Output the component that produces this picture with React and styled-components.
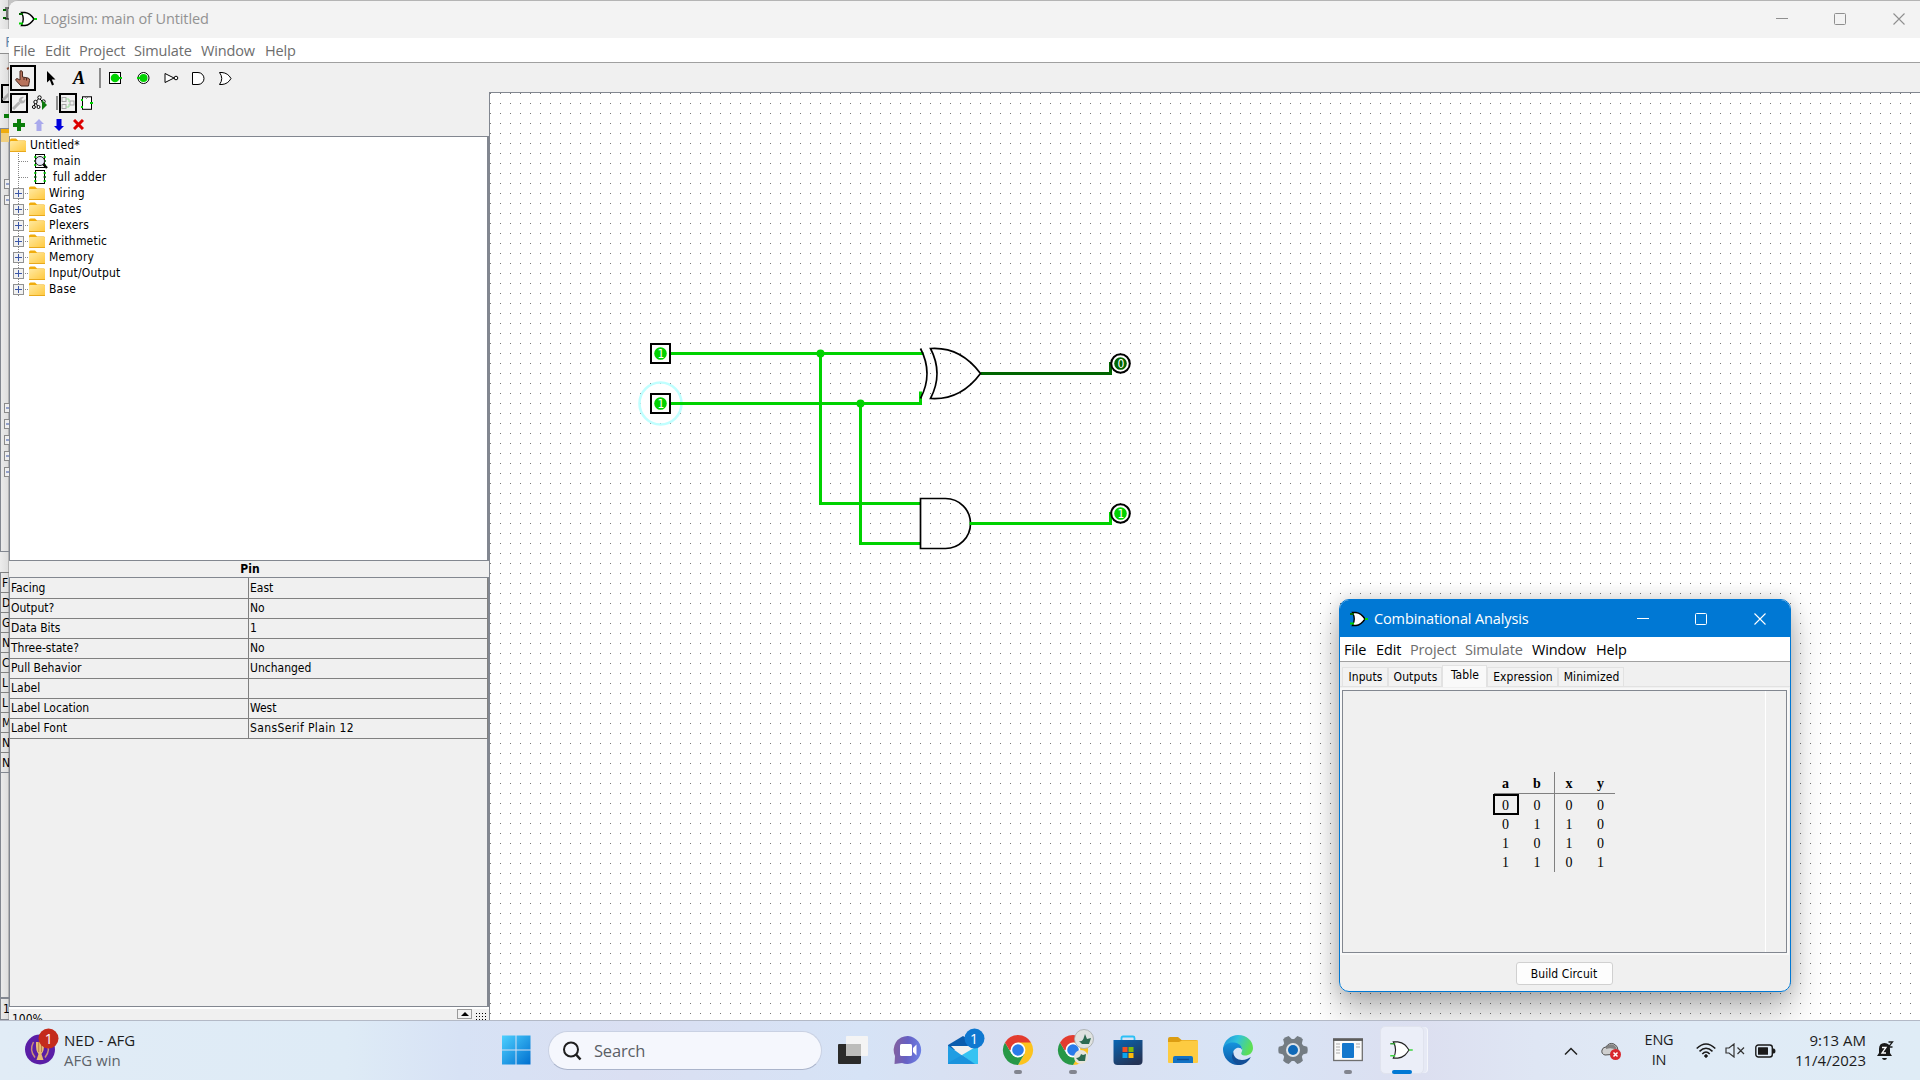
import React from "react";
import styled, { createGlobalStyle, css } from "styled-components";

const SEGOE = `"Open Sans", "Noto Sans", sans-serif`;
const TAHOMA = `"DejaVu Sans Condensed", "DejaVu Sans", sans-serif`;
const LINE = "#828790";
const GREEN = "#00d200";
const DARK = "#006400";

const Global = createGlobalStyle`
  * { box-sizing: border-box; }
  body { margin: 0; overflow: hidden; background: #f0f0f0; }
  svg { display: block; flex: none; }
`;

const Screen = styled.div`
  position: relative;
  width: 1920px;
  height: 1080px;
  display: grid;
  grid-template-rows: 1020px 60px;
  overflow: hidden;
  font-family: ${SEGOE};
`;
const Desktop = styled.div`
  display: grid;
  grid-template-columns: 9px 1fr;
  min-height: 0;
  background: linear-gradient(90deg, #e8e8e8, #c4c4c4 9px);
`;

/* ---------- window behind ---------- */
const BackWindow = styled.div`
  display: flex;
  flex-direction: column;
  overflow: hidden;
  height: 1020px;
  background: linear-gradient(90deg, #ececec, #dcdcdc);
  box-shadow: inset -1px 0 #b4b4b4;
  font: 12px ${TAHOMA};
`;
const BackPart = styled.div`
  flex: none;
  height: ${(p) => p.$h}px;
  padding-left: ${(p) => p.$pad || 0}px;
  padding-top: ${(p) => p.$top || 0}px;
  overflow: hidden;
  ${(p) => p.$menu && css`background: #f4f4f4; color: #5d87ad; font: 15px/24px ${SEGOE}; border-bottom: 1px solid #8e8e8e;`}
  ${(p) => p.$frame && css`border-left: 1px solid ${LINE}; border-top: 1px solid ${LINE}; border-bottom: 1px solid ${LINE};`}
`;
const BackCell = styled.div`
  height: 20px;
  flex: none;
  border-left: 1px solid ${LINE};
  border-top: 1px solid #808080;
  padding-left: 1px;
  line-height: 20px;
`;

/* ---------- main window ---------- */
const Window = styled.div`
  display: flex;
  flex-direction: column;
  height: 1020px;
  min-width: 0;
  overflow: hidden;
  border-top: 1px solid #b4b4b4;
  border-top-left-radius: 9px;
  background: #f0f0f0;
`;
const TitleBar = styled.div`
  flex: none;
  height: 37px;
  display: flex;
  align-items: center;
  padding: 0 0 1px 10px;
  background: #f3f3f3;
  color: #929292;
`;
const TitleText = styled.div`
  flex: 1;
  margin-left: 6px;
  font-size: 14.5px;
  line-height: 20px;
  letter-spacing: -0.12px;
  white-space: nowrap;
`;
const Caption = styled.div`
  width: ${(p) => p.$w}px;
  display: flex;
  justify-content: center;
`;
const MenuBar = styled.div`
  flex: none;
  height: ${(p) => p.$h}px;
  display: flex;
  gap: 9px;
  padding-left: 4px;
  background: #fff;
  border-bottom: 1px solid #a0a0a0;
  font-size: 14.5px;
  line-height: 25px;
  letter-spacing: -0.15px;
`;
const MenuItem = styled.span`
  color: ${(p) => (p.$dim ? "#6d6d6d" : "#000")};
  width: ${(p) => p.$w}px;
  white-space: nowrap;
`;
const ToolRow = styled.div`
  flex: none;
  display: flex;
  align-items: center;
  height: ${(p) => p.$h}px;
  padding-top: ${(p) => p.$top || 0}px;
`;
const Slot = styled.div`
  width: ${(p) => p.$w || 28}px;
  display: flex;
  justify-content: center;
`;
const Picked = styled.div`
  width: ${(p) => p.$w}px;
  height: ${(p) => p.$h}px;
  flex: none;
  border: 2px solid #000;
  display: flex;
  align-items: center;
  justify-content: center;
`;
const Divider = styled.div`
  width: 8px;
  height: ${(p) => p.$h}px;
  border-right: 2px solid #8c8c8c;
`;
const Body = styled.div`
  flex: 1;
  min-height: 0;
  display: grid;
  grid-template-columns: 480px 1fr;
`;
const Side = styled.div`
  display: flex;
  flex-direction: column;
  min-height: 0;
`;
const Tree = styled.div`
  flex: none;
  height: 425px;
  background: #fff;
  border: 1px solid ${LINE};
  border-right-width: 2px;
`;
const TreeRow = styled.div`
  height: 16px;
  display: flex;
  align-items: center;
  font: 12px/16px ${TAHOMA};
  letter-spacing: 0.2px;
  color: #000;
  white-space: pre;
`;
const Label = styled.span`
  margin-left: ${(p) => p.$ml}px;
`;
const PropTitle = styled.div`
  flex: none;
  height: 16px;
  padding-left: 2px;
  text-align: center;
  font: bold 12px/17px ${TAHOMA};
`;
const PropPane = styled.div`
  height: 430px;
  flex: none;
  border: 1px solid ${LINE};
  border-right-width: 2px;
`;
const PropRow = styled.div`
  display: grid;
  grid-template-columns: 239px 239px;
  height: 20px;
  width: 478px;
`;
const PropCell = styled.div`
  border-right: 1px solid #808080;
  border-bottom: 1px solid #808080;
  padding-left: 1px;
  font: 12px/20px ${TAHOMA};
  letter-spacing: ${(p) => (p.$wide ? "0.38px" : "0")};
  white-space: nowrap;
`;
const Status = styled.div`
  flex: 1;
  min-height: 0;
  display: flex;
  overflow: hidden;
  border-top: 2px solid #fff;
  font: 12px/16px ${TAHOMA};
  padding-left: 3px;
`;
const Zoom = styled.div`
  flex: 1;
  padding-top: 2px;
`;
const Spin = styled.div`
  width: 15px;
  height: 10px;
  border: 1px solid #9a9a9a;
  display: flex;
  justify-content: center;
  align-items: center;
  margin-right: 3px;
`;
const Canvas = styled.div`
  border-left: 1px solid ${LINE};
  border-top: 1px solid ${LINE};
  background: #fff;
  overflow: hidden;
  min-width: 0;
  min-height: 0;
`;

/* ---------- analysis window ---------- */
const Dialog = styled.div`
  position: absolute;
  left: 1339px;
  top: 599px;
  width: 452px;
  height: 393px;
  display: flex;
  flex-direction: column;
  border: 1px solid #0078d4;
  border-radius: 10px;
  background: #f0f0f0;
  overflow: hidden;
`;
const DialogShade = styled.div`
  position: absolute;
  left: 1339px;
  top: 599px;
  width: 452px;
  height: 393px;
  border-radius: 10px;
  box-shadow: 0 18px 34px rgba(0, 0, 0, 0.3), 0 0 18px rgba(0, 0, 0, 0.16);
`;
const DialogTitle = styled(TitleBar)`
  background: #0078d4;
  color: #fff;
  padding: 0 0 0 10px;
`;
const Tabs = styled.div`
  flex: none;
  height: 25px;
  display: flex;
  align-items: flex-end;
  padding-left: 2px;
  border-bottom: 1px solid #e2e2e2;
  font: 12px/19px ${TAHOMA};
`;
const Tab = styled.div`
  width: ${(p) => p.$w}px;
  height: ${(p) => (p.$on ? 22 : 19)}px;
  margin-bottom: ${(p) => (p.$on ? -1 : 0)}px;
  padding-left: 1px;
  text-align: center;
  white-space: nowrap;
  letter-spacing: 0.1px;
  background: ${(p) => (p.$on ? "#f9f9f9" : "#f2f2f2")};
  border: 1px solid #e2e2e2;
  border-bottom: 0;
`;
const Pane = styled.div`
  flex: none;
  width: 445px;
  height: 263px;
  margin: 3px 0 0 2px;
  border: 1px solid ${LINE};
  display: grid;
  grid-template-columns: 1fr 21px;
  outline: 2px solid #f8f8f8;
`;
const Gutter = styled.div`
  border-left: 1px solid #fff;
`;
const Truth = styled.div`
  display: grid;
  grid-template-columns: 60px 61px;
  grid-template-rows: 22px 78px;
  align-self: start;
  justify-self: start;
  margin: 81px 0 0 151px;
  font: 14px "Liberation Serif", serif;
`;
const Block = styled.div`
  display: grid;
  grid-template-columns: ${(p) => (p.$right ? "28px 35px" : "23px 32px")};
  column-gap: ${(p) => (p.$right ? 0 : 4)}px;
  grid-auto-rows: 19px;
  justify-items: center;
  align-content: start;
  line-height: 19px;
  padding-top: 2px;
  font-weight: ${(p) => (p.$head ? "bold" : "normal")};
  border-bottom: ${(p) => (p.$head ? "1px solid #808080" : "0")};
  border-left: ${(p) => (p.$right ? "1px solid #808080" : "0")};
`;
const Cell = styled.div`
  text-align: center;
  ${(p) => p.$focus && css`width: 26px; height: 21px; margin-top: -2px; border: 2px solid #000; line-height: 19px;`}
`;
const ButtonRow = styled.div`
  flex: 1;
  display: flex;
  justify-content: center;
  align-items: flex-start;
  padding: 9px 2px 0 0;
`;
const Button = styled.button`
  width: 97px;
  height: 23px;
  padding: 0;
  border: 1px solid #d0d0d0;
  border-radius: 3px;
  background: #fdfdfd;
  color: #000;
  font: 12px ${TAHOMA};
  letter-spacing: 0.1px;
`;

/* ---------- taskbar ---------- */
const Taskbar = styled.div`
  position: relative;
  display: flex;
  align-items: center;
  border-top: 1px solid #b3b9c6;
  background: linear-gradient(90deg, #e1ecf6 0, #deebf6 18%, #d7e2f5 24%, #dadff2 33%, #d6e3f6 45%, #dadff0 53%, #d8e4f6 65%, #dcdff0 74%, #dfe6f4 80%, #e0ebf6 88%, #dfecf6 100%);
`;
const Widgets = styled.div`
  width: 488px;
  padding-left: 25px;
  display: flex;
  align-items: center;
  gap: 5px;
`;
const Emblem = styled.div`
  margin-top: -8px;
`;
const TwoLines = styled.div`
  font-size: ${(p) => p.$fs || 15}px;
  line-height: 20px;
  letter-spacing: ${(p) => p.$ls || "0"};
  text-align: ${(p) => p.$align || "left"};
  color: #1c1c1c;
  white-space: nowrap;
  margin-top: -2px;
`;
const Muted = styled.div`
  color: #5d6369;
`;
const SearchBox = styled.div`
  width: 274px;
  height: 39px;
  margin: 0 3px 0 5px;
  border-radius: 20px;
  border: 1px solid #c9d1e3;
  border-bottom-color: #aab4cb;
  background: #f5f7fd;
  display: flex;
  align-items: center;
  gap: 12px;
  padding-left: 13px;
  font-size: 16.5px;
  letter-spacing: -0.2px;
  color: #5b5f66;
`;
const AppSlot = styled.div`
  position: relative;
  width: ${(p) => p.$w || 55}px;
  height: 59px;
  padding-bottom: 1px;
  display: flex;
  align-items: center;
  justify-content: center;
`;
const Mark = styled.i`
  position: absolute;
  left: 50%;
  bottom: 6px;
  width: ${(p) => (p.$on ? 20 : 8)}px;
  height: 4px;
  margin-left: ${(p) => (p.$on ? -10 : -4)}px;
  border-radius: 2px;
  background: ${(p) => (p.$on ? "#0078d4" : "#82858f")};
`;
const ActiveTile = styled.div`
  width: 44px;
  height: 48px;
  border-radius: 5px;
  border: 1px solid #e0e3ee;
  background: #ebeef8;
  box-shadow: 4px 0 0 -1px #e6e9f5, 5px 0 0 -1px #f4f6fb;
  display: flex;
  align-items: center;
  justify-content: center;
`;
const Tray = styled.div`
  margin-left: auto;
  display: flex;
  align-items: center;
  padding-right: 26px;
`;
const TrayItem = styled.div`
  width: ${(p) => p.$w}px;
  margin-right: ${(p) => p.$mr}px;
  ${(p) => p.$end && css`display: flex; justify-content: flex-end;`}
`;

/* ---------- drawings ---------- */
const GateLogo = ({ w = 18, h = 16, thin }) => (
  <svg width={w} height={h} viewBox="0 0 18 16">
    <path d="M2.500 1.500H6C11 2 13 5 15 8C13 11 11 14 6 14.500H2.500Q6 8 2.500 1.500Z" fill="#fff" stroke={thin ? "#222" : "#000"} strokeWidth={thin ? 0.9 : 1.4} />
    <path d="M0 3H4" stroke={thin ? "#2a9a2a" : DARK} strokeWidth={thin ? 1.1 : 2} />
    <path d="M0 12.500H4M15 8H18" stroke={thin ? "#3fd43f" : GREEN} strokeWidth={thin ? 1.2 : 2} />
  </svg>
);
const Captions = ({ color, sizes }) => (
  <>
    <Caption $w={sizes[0]}><svg width="12" height="12"><path d="M0 5.500H12" stroke={color} /></svg></Caption>
    <Caption $w={sizes[1]}><svg width="12" height="12"><rect x=".5" y=".5" width="11" height="11" rx="1" fill="none" stroke={color} /></svg></Caption>
    <Caption $w={sizes[2]}><svg width="12" height="12"><path d="M.5 .5L11.500 11.500M11.500 .5L.5 11.500" stroke={color} strokeWidth="1.100" /></svg></Caption>
  </>
);
const Folder = () => (
  <svg width="16" height="14" viewBox="0 0 16 14">
    <defs><linearGradient id="fo" x1="0" y1="0" x2="1" y2="1"><stop offset="0" stopColor="#ffe9a0" /><stop offset="1" stopColor="#ffc83d" /></linearGradient></defs>
    <path d="M0 4V2Q0 .5 1.500 .5H6L8 2.500H15Q16 2.500 16 4Z" fill="#f0ac0d" />
    <rect y="3" width="16" height="11" rx="1" fill="url(#fo)" />
    <path d="M0 13.500H16" stroke="#e8a91c" />
  </svg>
);
const Branch = ({ box }) => (
  <svg width="19" height="16" viewBox="0 0 19 16">
    <path d="M8.500 0V16" stroke="#888" strokeDasharray="1 1" />
    <path d="M9 8.500H19" stroke="#888" strokeDasharray="1 1" />
    {box && <><rect x="3.500" y="3.500" width="10" height="10" fill="#f1f1f1" stroke="#919191" /><path d="M5 8.500H12M8.500 5V12" stroke="#3b57a8" /></>}
  </svg>
);
const Chip = ({ lens }) => (
  <svg width="14" height="16" viewBox="0 0 14 16">
    <rect x="1.500" y="1.500" width="9" height="13" fill="#fff" stroke="#000" />
    {[4, 8, 12].map((y) => <path key={y} d={`M0 ${y}H2.500M9.500 ${y}H12`} stroke={y === 8 ? DARK : GREEN} strokeWidth="1.300" />)}
    {lens && <><path d="M9 11L13 15" stroke="#000" strokeWidth="2.400" /><circle cx="6" cy="8" r="4.500" fill="#e9e9fb" stroke="#222" /></>}
  </svg>
);
const Minus = ({ y }) => <g transform={`translate(4 ${y})`}><rect x=".5" y=".5" width="9" height="9" fill="#eee" stroke="#8a8a8a" /><path d="M2 5H8" stroke="#3b57a8" /></g>;

const PinValue = ({ x, y, v, round, color = GREEN }) => (
  <g>
    {round ? <circle cx={x} cy={y} r="9.300" fill="#fff" stroke="#000" strokeWidth="2" /> : <rect x={x - 9.5} y={y - 9.5} width="19" height="19" fill="#fff" stroke="#000" strokeWidth="2" />}
    <circle cx={x} cy={y} r="6.300" fill={color} />
    <text x={x + 0.5} y={y + 4.5} textAnchor="middle" fontSize="12" fontFamily="DejaVu Sans Condensed, DejaVu Sans, sans-serif" fill="#fff">{v}</text>
  </g>
);

const Circuit = () => (
  <svg width="1430" height="927" viewBox="490 93 1430 927">
    <defs>
      <pattern id="dots" x="490" y="93" width="10" height="10" patternUnits="userSpaceOnUse"><rect width="1" height="1" fill="#777" /></pattern>
    </defs>
    <rect x="490" y="93" width="1430" height="927" fill="url(#dots)" />
    <g transform="translate(.5 .5)" fill="none" strokeWidth="3">
      <circle cx="660" cy="403" r="21" stroke="#c0ffff" strokeWidth="2.600" />
      <path d="M670 353H923M820 353V503H920M670 403H920V391M860 403V543H920M970 523H1110V513H1112" stroke={GREEN} />
      <path d="M980 373H1110V363H1112" stroke={DARK} />
      <circle cx="820" cy="353" r="4" fill={GREEN} />
      <circle cx="860" cy="403" r="4" fill={GREEN} />
      <g stroke="#000" strokeWidth="1.700">
        <path d="M920 348Q933 373 920 398" />
        <path d="M930 348Q943 373 930 398Q960 400 980 373Q960 346 930 348Z" />
        <path d="M920 498H945A25 25 0 0 1 945 548H920Z" />
      </g>
      <path d="M969 523H974" stroke={GREEN} />
      <PinValue x={660} y={353} v="1" />
      <PinValue x={660} y={403} v="1" />
      <PinValue x={1120} y={363} v="0" round color={DARK} />
      <PinValue x={1120} y={513} v="1" round />
    </g>
  </svg>
);

const Chrome = ({ guest }) => (
  <svg width="42" height="44" viewBox="-21 -22 42 44">
    <path d="M0 0L-13 -7.500A15 15 0 0 1 13 -7.500Z" fill="#e33b2e" />
    <path d="M0 -7.500H13A15 15 0 0 1 0 15L6.500 3.750Z" fill="#fcc31e" />
    <path d="M-13 -7.500A15 15 0 0 0 0 15L6.500 3.700L-6.500 3.700Z" fill="#279847" />
    <path d="M-13 -7.500H0V0H-8.600Z" fill="#e33b2e" />
    <circle r="7.400" fill="#fff" /><circle r="5.800" fill="#2a7be9" />
    {guest && <>
      <circle cx="11" cy="-11" r="9.500" fill="#dfe2e0" stroke="#a5a8a8" strokeWidth=".8" />
      <path d="M6 -9Q10 -8 11 -13L12 -16L14 -11L18 -12L16 -6H9Z" fill="#2d6a50" />
      <circle cx="8" cy="7" r="7" fill="#e6e4dc" />
      <path d="M3 8Q7 8 8 4L10 5L13 4L12 11H6Z" fill="#2d6a50" />
    </>}
  </svg>
);
const Win = () => (
  <svg width="30" height="30" viewBox="0 0 30 30">
    <defs><linearGradient id="wn" x1="0" y1="0" x2="1" y2="1"><stop offset="0" stopColor="#4dd0ff" /><stop offset="1" stopColor="#006fcf" /></linearGradient></defs>
    <path fill="url(#wn)" d="M1 .5H14.500V14.500H1ZM15.500 .5H29.500V14.500H15.500ZM1 15.500H14.500V29.500H1ZM15.500 15.500H29.500V29.500H15.500Z" />
  </svg>
);
const TaskView = () => (
  <svg width="30" height="30" viewBox="0 0 30 30">
    <rect x="0" y="9" width="23" height="20" rx="1" fill="#2b2b2a" />
    <rect x="8" y="1" width="22" height="20" rx="1" fill="#f4f4f4" />
    <rect x="8" y="9" width="15" height="12" fill="#bdbdbb" />
  </svg>
);
const Chat = () => (
  <svg width="30" height="30" viewBox="0 0 30 30">
    <defs><linearGradient id="ch" x1="0" y1=".3" x2="1" y2=".4"><stop offset="0" stopColor="#84609e" /><stop offset=".5" stopColor="#6660c4" /><stop offset="1" stopColor="#6c80e4" /></linearGradient></defs>
    <path d="M15 1A14 14 0 1 1 9 28L1.500 29L2 21A14 14 0 0 1 15 1Z" fill="url(#ch)" />
    <rect x="7" y="9" width="12" height="12" rx="1.500" fill="#fff" /><path d="M20 13L23.500 9.500V20.500L20 17Z" fill="#fff" />
  </svg>
);
const Mail = () => (
  <svg width="44" height="44" viewBox="-7 -8 44 44">
    <path d="M0 9L15 0L30 9V14H0Z" fill="#0a5cad" />
    <path d="M3 10H27V18L15 22Z" fill="#f0f0f0" />
    <path d="M0 9.500L26 28H0Z" fill="#1f9de3" /><path d="M30 9.500V28H26L14 19Z" fill="#35c3f2" /><path d="M14 19L27 28H0V27Z" fill="#1a93dd" />
    <circle cx="26.500" cy="2.500" r="10" fill="#0f78d0" />
    <text x="26" y="7.500" textAnchor="middle" fontFamily="Open Sans, sans-serif" fontSize="14" fill="#fff">1</text>
  </svg>
);
const Store = () => (
  <svg width="30" height="30" viewBox="0 0 30 30">
    <defs><linearGradient id="st" x1="0" y1="0" x2=".6" y2="1"><stop offset="0" stopColor="#0866b4" /><stop offset="1" stopColor="#243456" /></linearGradient></defs>
    <path d="M8.500 6V3Q8.500 1.500 10 1.500H20Q21.500 1.500 21.500 3V6" fill="none" stroke="#2cc0f6" strokeWidth="1.800" />
    <path d="M.5 5H29.500V26Q29.500 30 25.500 30H4.500Q.5 30 .5 26Z" fill="url(#st)" />
    <path fill="#f35022" d="M9.500 12H14.500V17H9.500Z" /><path fill="#80bb0a" d="M15.500 12H20.500V17H15.500Z" /><path fill="#0aa5ee" d="M9.500 18H14.500V23H9.500Z" /><path fill="#ffb90a" d="M15.500 18H20.500V23H15.500Z" />
  </svg>
);
const Explorer = () => (
  <svg width="30" height="28" viewBox="0 0 30 28">
    <path d="M0 6V3Q0 1 2 1H10L13.500 4H28Q30 4 30 6V9H0Z" fill="#dc9d12" />
    <path d="M0 6H11L14 4.500H30V26Q30 27 29 27H1Q0 27 0 26Z" fill="#fdcb41" />
    <path d="M5 27V22Q5 20 7 20H23Q25 20 25 22V27Z" fill="#1272c4" /><path d="M9 23.500H21" stroke="#0a4c92" strokeWidth="1.400" />
  </svg>
);
const Edge = () => (
  <svg width="30" height="30" viewBox="0 0 30 30">
    <defs>
      <linearGradient id="e1" x1="0" y1="0" x2="1" y2=".3"><stop offset="0" stopColor="#1b8ddb" /><stop offset=".5" stopColor="#30c2dc" /><stop offset="1" stopColor="#5ddf55" /></linearGradient>
      <linearGradient id="e2" x1="0" y1="0" x2="0" y2="1"><stop offset="0" stopColor="#1593dd" /><stop offset="1" stopColor="#0e59a7" /></linearGradient>
    </defs>
    <path d="M0 14C1 5 8 0 15 0C24 0 30 6 30 13C30 18 26 20.500 22 20.500C19 20.500 17.500 19 18.500 17.500C21 13 17 9 12 9C6 9 1 12 0 17Z" fill="url(#e1)" />
    <path d="M0 14C1 9.500 6 7 11 7.500C16 8 19.500 11 19 15C18 11.500 11 12 10 18C9.500 24 13 29 18 29.700C8 31.500 0 24 0 14Z" fill="url(#e2)" />
    <path d="M10.500 17C10 21.500 14 25 19 25C23 25 25.500 23.500 27.800 22C25 28 19.500 30.500 15 30C9 27.500 7.500 20.500 10.500 17Z" fill="#124f97" />
  </svg>
);
const Gear = () => (
  <svg width="30" height="30" viewBox="-15 -15 30 30">
    <g fill="#747c83">
      <circle r="11" />
      {[30, 90, 150, 210, 270, 330].map((a) => <path key={a} d="M-5 -8L-3.200 -14.200Q0 -15.200 3.200 -14.200L5 -8Z" transform={`rotate(${a})`} />)}
    </g>
    <circle r="7" fill="#dfe4ea" /><circle r="5" fill="#1069b8" />
  </svg>
);
const Panel = () => (
  <svg width="30" height="24" viewBox="0 0 30 24">
    <rect x=".7" y="1" width="28.600" height="21.500" fill="#fafafa" stroke="#6f6f6f" strokeWidth="1.300" />
    <path d="M0 1.700H30" stroke="#5d5d5d" strokeWidth="2.500" />
    <rect x="9" y="5" width="12" height="15" rx="1" fill="#1477cc" />
    <path d="M3 6H7M3 9H7M3 12H7M3 15H7M23 6H27M23 9H27" stroke="#aaa" />
  </svg>
);
const Trophy = () => (
  <svg width="34" height="38" viewBox="0 0 34 38">
    <circle cx="15" cy="21.500" r="15" fill="#5a1ea6" />
    <path d="M8.500 14Q4 22 10 29.500M21.500 14Q26 22 20 29.500" fill="none" stroke="#c88f79" strokeWidth="1.500" />
    <path d="M11 14H19Q19.500 23 16.500 26L18.500 32H11.500L13.500 26Q10.500 23 11 14Z" fill="#e9ba74" /><path d="M13.700 14V24M16.500 14V24" stroke="#b57b45" strokeWidth=".9" />
    <circle cx="23.500" cy="10.500" r="10" fill="#c42b1c" />
    <text x="23.800" y="15.500" textAnchor="middle" fontFamily="Open Sans, sans-serif" fontSize="14" fill="#fff">1</text>
  </svg>
);

const props = [["Facing", "East"], ["Output?", "No"], ["Data Bits", "1"], ["Three-state?", "No"], ["Pull Behavior", "Unchanged"], ["Label", ""], ["Label Location", "West"], ["Label Font", "SansSerif Plain 12"]];
const libs = ["Wiring", "Gates", "Plexers", "Arithmetic", "Memory", "Input/Output", "Base"];
const menus = [["File", 23], ["Edit", 25], ["Project", 46], ["Simulate", 58], ["Window", 55], ["Help", 32]];
const backs = ["F", "D", "G", "N", "C", "L", "L", "M", "N", "N"];
const ins = ["0", "0", "0", "1", "1", "0", "1", "1"];
const outs = ["0", "0", "1", "0", "1", "0", "0", "1"];

const Back = () => (
  <BackWindow>
    <BackPart $h={29}><svg width="9" height="29"><path d="M3 10H6M3 18H6" stroke={DARK} strokeWidth="2" /><path d="M5 8H9M7 9V19M5 19H9" stroke="#000" fill="none" /></svg></BackPart>
    <BackPart $h={25} $menu $pad={5}>F</BackPart>
    <BackPart $h={74}><svg width="9" height="74"><path d="M7 15l2-1" stroke="#8a4a33" strokeWidth="2" /><path d="M9 31H2V48H9" fill="none" stroke="#000" strokeWidth="2" /><path d="M3 46L9 40" stroke="#aaa" strokeWidth="3" /><path d="M4 62H9" stroke="#087a08" strokeWidth="4" /></svg></BackPart>
    <BackPart $h={424} $frame><svg width="9" height="420" viewBox="1 129 9 420"><rect x="1" y="129" width="9" height="4" fill="#f0ac0d" /><rect x="1" y="133" width="9" height="9" fill="#f0cf7e" />{[179, 195, 403, 419, 435, 451, 467].map((y) => <Minus key={y} y={y} />)}</svg></BackPart>
    <BackPart $h={20} />
    {backs.map((t, i) => <BackCell key={i}>{t}</BackCell>)}
    <BackPart $h={226} $frame />
    <BackPart $h={22} $frame $pad={2} $top={3}>1</BackPart>
  </BackWindow>
);

const Toolbar = () => (
  <ToolRow $h={29} $top={1}>
    <Slot><Picked $w={26} $h={26}>
      <svg width="16" height="17" viewBox="0 0 16 17"><path d="M5 1Q7 0 7.500 2V7L13 8Q15 8.500 14.500 10.500L13.500 16H6L1 10.500Q0 9 2 8.500L5 10Z" fill="#b8735c" stroke="#4a2a20" /><path d="M9 7.500V10M11.500 8V10.500" stroke="#4a2a20" /></svg>
    </Picked></Slot>
    <Slot><svg width="10" height="15" viewBox="0 0 10 15"><path d="M1 0V11.500L3.800 9L6 14.500L8 13.600L5.800 8.500H9.500Z" /></svg></Slot>
    <Slot><svg width="24" height="18"><text x="6" y="15" fontFamily="Liberation Serif, serif" fontWeight="bold" fontStyle="italic" fontSize="18">A</text></svg></Slot>
    <Divider $h={20} />
    <Slot><svg width="15" height="14"><rect x="1.500" y="1.500" width="11" height="11" fill="#fff" stroke="#000" /><circle cx="7" cy="7" r="4.300" fill={GREEN} /><path d="M10 7H14" stroke={GREEN} strokeWidth="2" /></svg></Slot>
    <Slot><svg width="15" height="14"><circle cx="7.500" cy="7" r="5.500" fill="#fff" stroke="#000" /><circle cx="7.500" cy="7" r="4" fill={GREEN} /><path d="M1 7H5" stroke={GREEN} strokeWidth="2" /></svg></Slot>
    <Slot><svg width="15" height="12"><path d="M1 1.500V10.500L10 6Z" fill="#fff" stroke="#000" /><circle cx="12" cy="6" r="1.800" fill="#fff" stroke="#000" /></svg></Slot>
    <Slot $w={27}><svg width="15" height="15"><path d="M1.500 1.500H7A6 6 0 0 1 7 13.500H1.500Z" fill="#fff" stroke="#000" /></svg></Slot>
    <Slot><svg width="16" height="15"><path d="M1.500 1.500H4Q10 2 13 7.500Q10 13 4 13.500H1.500Q6 7.500 1.500 1.500Z" fill="#fff" stroke="#000" /></svg></Slot>
  </ToolRow>
);

const SideTools = () => (
  <>
    <ToolRow $h={21}>
      <Slot $w={20}><Picked $w={18} $h={20}><svg width="14" height="14" viewBox="0 0 14 14"><path d="M1 13L7.500 6.500" stroke="#b2b2b2" strokeWidth="3" /><path d="M7 3Q9 0 12 1L9.500 3.500L11 5L13.500 3Q13.500 8 9 7.500Q6 6 7 3Z" fill="#b2b2b2" /></svg></Picked></Slot>
      <Slot $w={21}><svg width="16" height="15" viewBox="0 0 16 15"><g fill="#fff" stroke="#000"><path d="M7 3L3 8L2 12M7 3L11 7M4 8L6 12" fill="none" /><circle cx="7.500" cy="2.500" r="1.700" /><circle cx="3.500" cy="7" r="1.700" /><circle cx="1.900" cy="12" r="1.500" /><circle cx="6.500" cy="12" r="1.500" /><circle cx="11.500" cy="6.500" r="1.700" /></g><path d="M10 5L15 10L10 15Z" fill="#0c7a0c" /></svg></Slot>
      <Divider $h={14} />
      <Slot $w={19}><Picked $w={18} $h={20}><svg width="14" height="14" viewBox="0 0 14 14"><g fill="none" stroke="#a6a6a6"><rect x="1" y="1.500" width="4" height="4" /><rect x="1" y="8.500" width="4" height="4" /><rect x="9" y="5" width="4" height="4" /></g><path d="M5 3H8V6M5 11H8V8" fill="none" stroke="#9adb9a" /></svg></Picked></Slot>
      <Slot $w={20}><svg width="12" height="14" viewBox="0 0 12 14"><rect x="1.500" y=".8" width="9" height="12.500" fill="#fff" stroke="#000" /><path d="M4 1Q5.500 4 7 1" fill="none" stroke="#777" /><path d="M0 4H2M0 11H2M9 7H12" stroke={GREEN} strokeWidth="2" /></svg></Slot>
    </ToolRow>
    <ToolRow $h={23}>
      <Slot $w={20}><svg width="12" height="12"><path d="M0 6H12M6 0V12" stroke="#0a7d0a" strokeWidth="4" /></svg></Slot>
      <Slot $w={20}><svg width="10" height="12"><path d="M5 0L10 5H7.500V12H2.500V5H0Z" fill="#a9a9ec" /></svg></Slot>
      <Slot $w={20}><svg width="10" height="12"><path d="M5 12L10 7H7.500V0H2.500V7H0Z" fill="#0000dc" /></svg></Slot>
      <Slot $w={19}><svg width="11" height="11"><path d="M1 1L10 10M10 1L1 10" stroke="#dc0000" strokeWidth="3" /></svg></Slot>
    </ToolRow>
  </>
);

const Analysis = () => (
  <Dialog>
    <DialogTitle>
      <GateLogo />
      <TitleText>Combinational Analysis</TitleText>
      <Captions color="#fff" sizes={[58, 57, 61]} />
    </DialogTitle>
    <MenuBar $h={25}>
      {menus.map(([m, w]) => <MenuItem key={m} $w={w} $dim={m === "Project" || m === "Simulate"}>{m}</MenuItem>)}
    </MenuBar>
    <Tabs>
      <Tab $w={46}>Inputs</Tab><Tab $w={54}>Outputs</Tab><Tab $w={45} $on>Table</Tab><Tab $w={71}>Expression</Tab><Tab $w={66}>Minimized</Tab>
    </Tabs>
    <Pane>
      <Truth>
        <Block $head><Cell>a</Cell><Cell>b</Cell></Block>
        <Block $head $right><Cell>x</Cell><Cell>y</Cell></Block>
        <Block>{ins.map((v, i) => <Cell key={i} $focus={i === 0}>{v}</Cell>)}</Block>
        <Block $right>{outs.map((v, i) => <Cell key={i}>{v}</Cell>)}</Block>
      </Truth>
      <Gutter />
    </Pane>
    <ButtonRow><Button>Build Circuit</Button></ButtonRow>
  </Dialog>
);

export default function App() {
  return (
    <Screen>
      <Global />
      <Desktop>
        <Back />
        <Window>
          <TitleBar><GateLogo /><TitleText>Logisim: main of Untitled</TitleText><Captions color="#8f8f8f" sizes={[40, 76, 42]} /></TitleBar>
          <MenuBar $h={25}>{menus.map(([m, w]) => <MenuItem key={m} $w={w} $dim>{m}</MenuItem>)}</MenuBar>
          <Toolbar />
          <Body>
            <Side>
              <SideTools />
              <Tree>
                <TreeRow><Folder /><Label $ml={4}>Untitled*</Label></TreeRow>
                <TreeRow><Branch /><Slot $w={24}><Chip lens /></Slot><Label $ml={0}>main</Label></TreeRow>
                <TreeRow><Branch /><Slot $w={24}><Chip /></Slot><Label $ml={0}>full adder</Label></TreeRow>
                {libs.map((l) => <TreeRow key={l}><Branch box /><Folder /><Label $ml={4}>{l}</Label></TreeRow>)}
              </Tree>
              <PropTitle>Pin</PropTitle>
              <PropPane>{props.map(([a, b]) => <PropRow key={a}><PropCell>{a}</PropCell><PropCell $wide={b.length > 12}>{b}</PropCell></PropRow>)}</PropPane>
              <Status>
                <Zoom>100%</Zoom>
                <Spin><svg width="8" height="4"><path d="M4 0L8 4H0Z" /></svg></Spin>
                <svg width="14" height="12"><g fill="#000">{[4, 7, 10].map((y) => [1, 4, 7, 10].map((x) => <rect key={x + "-" + y} x={x} y={y} width="1" height="1" />))}</g></svg>
              </Status>
            </Side>
            <Canvas><Circuit /></Canvas>
          </Body>
        </Window>
      </Desktop>
      <DialogShade />
      <Analysis />
      <Taskbar>
        <Widgets>
          <Emblem><Trophy /></Emblem>
          <TwoLines>NED - AFG<Muted>AFG win</Muted></TwoLines>
        </Widgets>
        <AppSlot><Win /></AppSlot>
        <SearchBox>
          <svg width="20" height="20" viewBox="0 0 20 20" fill="none" stroke="#1f1f1f" strokeWidth="2"><circle cx="9" cy="8.500" r="7" /><path d="M14 13.500L18.500 18.500" strokeWidth="2.600" /></svg>
          Search
        </SearchBox>
        <AppSlot><TaskView /></AppSlot>
        <AppSlot><Chat /></AppSlot>
        <AppSlot><Mail /></AppSlot>
        <AppSlot><Chrome /><Mark /></AppSlot>
        <AppSlot><Chrome guest /><Mark /></AppSlot>
        <AppSlot><Store /></AppSlot>
        <AppSlot><Explorer /></AppSlot>
        <AppSlot><Edge /></AppSlot>
        <AppSlot><Gear /></AppSlot>
        <AppSlot><Panel /><Mark /></AppSlot>
        <AppSlot $w={53}><ActiveTile><GateLogo w={25} h={20} thin /></ActiveTile><Mark $on /></AppSlot>
        <Tray>
          <TrayItem $w={14} $mr={23}><svg width="14" height="8"><path d="M1 7.500L7 1.500L13 7.500" fill="none" stroke="#222" strokeWidth="1.500" /></svg></TrayItem>
          <TrayItem $w={20} $mr={23}><svg width="20" height="20" viewBox="0 0 20 20"><path d="M4 14Q0 13 1 9Q2 6 5 6Q8 1 13 3Q17 5 17 9V13Z" fill="#cfcfcf" stroke="#505050" /><path d="M5 6Q8 2 13 4Q16 6 16 9Q10 6 5 8Z" fill="#828282" /><circle cx="14.500" cy="13.500" r="5.500" fill="#d8262c" /><path d="M12.500 11.500L16.500 15.500M16.500 11.500L12.500 15.500" stroke="#fff" strokeWidth="1.500" /></svg></TrayItem>
          <TrayItem $w={30} $mr={22}><TwoLines $align="center" $fs={14.5} $ls="-0.2px">ENG<div>IN</div></TwoLines></TrayItem>
          <TrayItem $w={20} $mr={9}><svg width="20" height="15" viewBox="0 0 20 15" fill="none" stroke="#1a1a1a" strokeWidth="1.500"><path d="M.7 5.500Q10 -3.500 19.300 5.500M3.500 8.400Q10 2 16.500 8.400M6.300 11Q10 7 13.700 11" /><circle cx="10" cy="13" r="1.300" fill="#1a1a1a" strokeWidth="1" /></svg></TrayItem>
          <TrayItem $w={21} $mr={9}><svg width="21" height="15" viewBox="0 0 21 15" fill="none" stroke="#333" strokeWidth="1.200"><path d="M1 5H4L9 1V14L4 10H1ZM12.500 4.500L19 11M19 4.500L12.500 11" /></svg></TrayItem>
          <TrayItem $w={21} $mr={16}><svg width="21" height="14" viewBox="0 0 21 14"><rect x=".8" y="1" width="16.500" height="12" rx="2.500" fill="none" stroke="#1a1a1a" strokeWidth="1.400" /><rect x="3" y="3.200" width="10" height="7.600" rx=".5" fill="#1a1a1a" /><path d="M18 4.500H19Q20.500 5 20.500 7T19 9.500H18Z" fill="#1a1a1a" /></svg></TrayItem>
          <TrayItem $w={74} $mr={10} $end><TwoLines $align="right">9:13 AM<div>11/4/2023</div></TwoLines></TrayItem>
          <svg width="18" height="20" viewBox="0 0 18 20"><path d="M1 15L3 12V8Q3 2 8.500 2Q14 2 14 8V12L16 15Z" fill="#1a1a1a" /><path d="M6 17H11Q10.500 19 8.500 19T6 17Z" fill="#1a1a1a" /><path d="M6 6.500H10L6 12H10" fill="none" stroke="#fff" strokeWidth="1.300" /><path d="M12.500 1H16.500L12.500 6H16.500" fill="none" stroke="#1a1a1a" strokeWidth="1.300" /></svg>
        </Tray>
      </Taskbar>
    </Screen>
  );
}
